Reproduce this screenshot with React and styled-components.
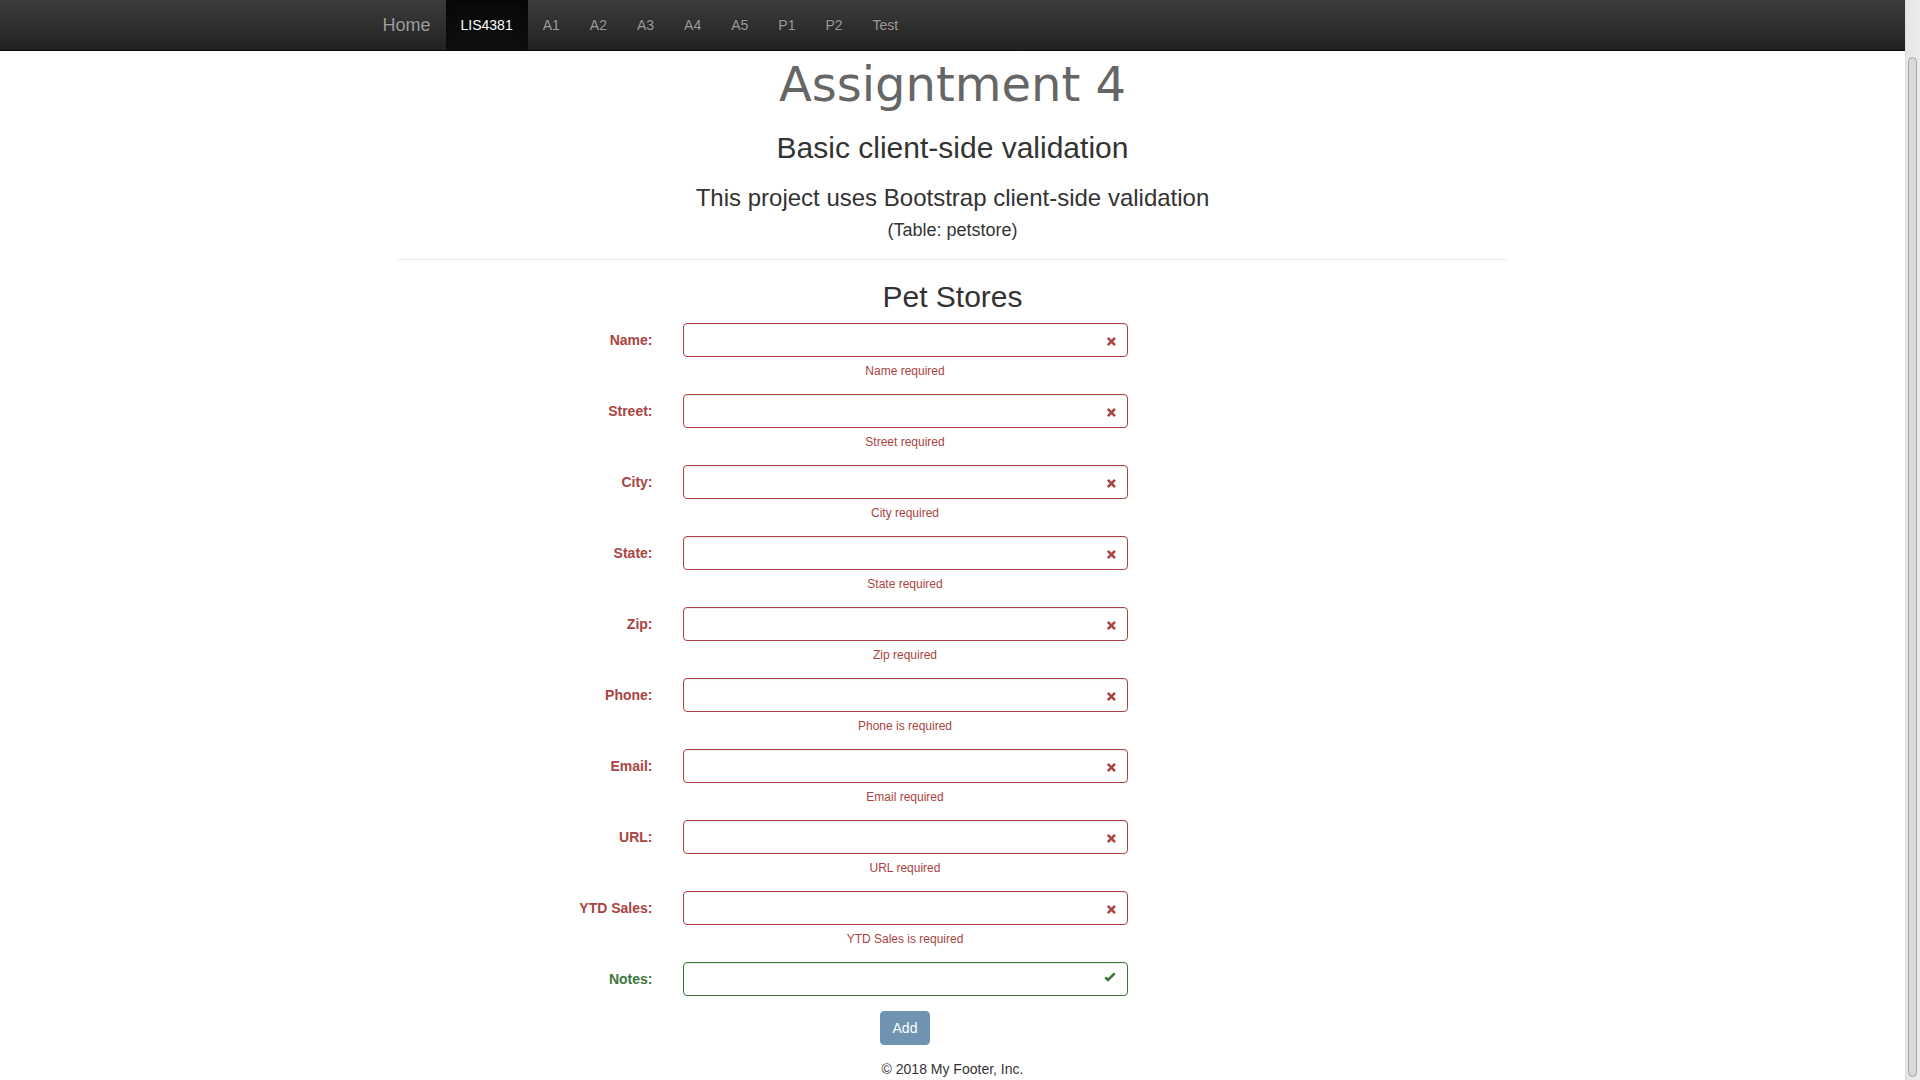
import React from 'react'
import styled, { createGlobalStyle } from 'styled-components'

const GlobalStyle = createGlobalStyle`
  html, body {
    overflow: hidden;
  }
  body {
    margin: 0;
    font-family: "Liberation Sans", Arial, sans-serif;
    font-size: 14px;
    line-height: 20px;
    color: #333;
    background: #fff;
  }
  * {
    box-sizing: border-box;
  }
`

const Window = styled.div`
  display: flex;
  height: 100vh;
`

const Page = styled.div`
  flex: 1;
  min-width: 0;
  overflow: hidden;
`

const ScrollTrack = styled.div`
  flex: 0 0 15px;
  display: flex;
  flex-direction: column;
  padding: 57px 3px 3px 3px;
  background: linear-gradient(to right, #d6d6d6 0, #e6e6e6 1px, #ececec 100%);
`

const ScrollThumb = styled.div`
  flex: 1;
  background: #d9d9d9;
  border: 1px solid #a4a4a4;
  border-radius: 5px;
`

const Navbar = styled.nav`
  height: 51px;
  background-image: linear-gradient(to bottom, #3c3c3c 0, #222 100%);
  border-bottom: 1px solid #080808;
`

const NavInner = styled.div`
  width: 1170px;
  margin: 0 auto;
  display: flex;
  height: 50px;
`

const Brand = styled.a`
  padding: 15px;
  font-size: 18px;
  line-height: 20px;
  color: #9d9d9d;
  text-shadow: 0 -1px 0 rgba(0, 0, 0, .25);
  text-decoration: none;
`

const NavList = styled.ul`
  display: flex;
  margin: 0;
  padding: 0;
  list-style: none;
`

const NavItem = styled.li`
  a {
    display: block;
    padding: 15px;
    line-height: 20px;
    font-size: 14px;
    text-decoration: none;
    color: ${({ $active }) => ($active ? '#fff' : '#9d9d9d')};
    text-shadow: 0 -1px 0 rgba(0, 0, 0, .25);
    background-image: ${({ $active }) =>
      $active ? 'linear-gradient(to bottom, #080808 0, #0f0f0f 100%)' : 'none'};
    box-shadow: ${({ $active }) => ($active ? 'inset 0 3px 9px rgba(0, 0, 0, .25)' : 'none')};
  }
`

const Container = styled.main`
  width: 1110px;
  margin: 0 auto;
`

const Header = styled.header`
  text-align: center;
`

const Title = styled.h1`
  margin: 7px 0 0;
  font-family: "DejaVu Sans", sans-serif;
  font-weight: normal;
  font-size: 48px;
  line-height: 53px;
  color: #666;
`

const Subtitle = styled.h2`
  margin: 20px 0 0;
  font-weight: 500;
  font-size: 30px;
  line-height: 33px;
`

const Lead = styled.h3`
  margin: 21px 0 0;
  font-weight: 500;
  font-size: 24px;
  line-height: 26px;
`

const TableNote = styled.p`
  margin: 9px 0 0;
  font-size: 18px;
  line-height: 20px;
`

const Rule = styled.hr`
  margin: 19px 0 0;
  border: 0;
  border-top: 1px solid #eee;
`

const FormTitle = styled.h2`
  margin: 20px 0 0;
  text-align: center;
  font-weight: 500;
  font-size: 30px;
  line-height: 33px;
`

const Form = styled.form`
  margin-top: 10px;
`

const FormGroup = styled.div`
  display: grid;
  grid-template-columns: 255px 445px;
  column-gap: 30px;
  margin-bottom: 15px;
  color: ${({ $valid }) => ($valid ? '#3c763d' : '#a94442')};
`

const Label = styled.label`
  padding-top: 7px;
  text-align: right;
  font-weight: bold;
  font-size: 14px;
  line-height: 20px;
`

const Field = styled.div`
  position: relative;
`

const Input = styled.input`
  display: block;
  width: 100%;
  height: 34px;
  padding: 6px 42px 6px 12px;
  font: inherit;
  color: #555;
  background: #fff;
  border: 1px solid ${({ $valid }) => ($valid ? '#3c763d' : '#a94442')};
  border-radius: 4px;
  box-shadow: inset 0 1px 1px rgba(0, 0, 0, .075);
  outline: none;
`

const Feedback = styled.svg`
  position: absolute;
  top: 0;
  right: 0;
  width: 34px;
  height: 34px;
  pointer-events: none;
`

const Help = styled.span`
  grid-column: 2;
  display: block;
  margin-top: 6px;
  margin-bottom: -1px;
  text-align: center;
  font-size: 12px;
  line-height: 17px;
`

const Actions = styled.div`
  display: grid;
  grid-template-columns: 255px 445px;
  column-gap: 30px;
`

const AddButton = styled.button`
  grid-column: 2;
  justify-self: center;
  padding: 6px 12px;
  font-family: inherit;
  font-size: 14px;
  line-height: 20px;
  color: #fff;
  background: #7193b2;
  border: 1px solid #7193b2;
  border-radius: 4px;
  cursor: not-allowed;
`

const Footer = styled.footer`
  margin-top: 14px;
  text-align: center;
  font-size: 14px;
  line-height: 20px;
`

const fields = [
  { label: 'Name:', help: 'Name required' },
  { label: 'Street:', help: 'Street required' },
  { label: 'City:', help: 'City required' },
  { label: 'State:', help: 'State required' },
  { label: 'Zip:', help: 'Zip required' },
  { label: 'Phone:', help: 'Phone is required' },
  { label: 'Email:', help: 'Email required' },
  { label: 'URL:', help: 'URL required' },
  { label: 'YTD Sales:', help: 'YTD Sales is required' },
  { label: 'Notes:', valid: true },
]

const links = ['A1', 'A2', 'A3', 'A4', 'A5', 'P1', 'P2', 'Test']

function FeedbackIcon({ valid }) {
  return (
    <Feedback viewBox="0 0 34 34">
      {valid ? (
        <polyline points="11.3,15.3 14,18 20.7,11.3" fill="none" stroke="#3c763d" strokeWidth="2.6" />
      ) : (
        <g stroke="#a94442" strokeWidth="2.6">
          <line x1="13.8" y1="14.9" x2="21" y2="22.1" />
          <line x1="21" y1="14.9" x2="13.8" y2="22.1" />
        </g>
      )}
    </Feedback>
  )
}

export default function App() {
  return (
    <>
      <GlobalStyle />
      <Window>
        <Page>
          <Navbar>
            <NavInner>
              <Brand href="#">Home</Brand>
              <NavList>
                <NavItem $active><a href="#">LIS4381</a></NavItem>
                {links.map((l) => (
                  <NavItem key={l}><a href="#">{l}</a></NavItem>
                ))}
              </NavList>
            </NavInner>
          </Navbar>

          <Container>
            <Header>
              <Title>Assigntment 4</Title>
              <Subtitle>Basic client-side validation</Subtitle>
              <Lead>This project uses Bootstrap client-side validation</Lead>
              <TableNote>(Table: petstore)</TableNote>
            </Header>
            <Rule />

            <FormTitle>Pet Stores</FormTitle>
            <Form onSubmit={(e) => e.preventDefault()}>
              {fields.map((f) => (
                <FormGroup key={f.label} $valid={f.valid}>
                  <Label>{f.label}</Label>
                  <Field>
                    <Input type="text" $valid={f.valid} />
                    <FeedbackIcon valid={f.valid} />
                  </Field>
                  {f.help && <Help>{f.help}</Help>}
                </FormGroup>
              ))}
              <Actions>
                <AddButton type="submit">Add</AddButton>
              </Actions>
            </Form>

            <Footer>© 2018 My Footer, Inc.</Footer>
          </Container>
        </Page>
        <ScrollTrack>
          <ScrollThumb />
        </ScrollTrack>
      </Window>
    </>
  )
}
